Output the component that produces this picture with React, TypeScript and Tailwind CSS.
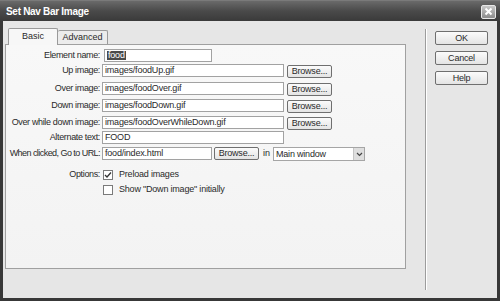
import React from "react";

const font = { fontFamily: '"Liberation Sans", Arial, sans-serif' };

const Input = ({ value, w, selected }: { value: string; w: string; selected?: boolean }) => (
  <div className={`${w} h-[13px] bg-white border border-[#a2a2a2] flex items-center px-[2px] text-[9px] tracking-[-0.2px] text-[#2a2a2a] overflow-hidden whitespace-nowrap leading-none`}>
    {selected ? <span className="bg-[#4a4a4a] text-white px-[1px]">{value}</span> : value}
  </div>
);

const Btn = ({ label, w }: { label: string; w: string }) => (
  <div className={`${w} rounded-[2px] border border-[#6f6f6f] bg-gradient-to-b from-[#fbfbfb] to-[#e4e4e4] flex items-center justify-center text-[9px] tracking-[-0.2px] text-[#2a2a2a] leading-none`}>
    {label}
  </div>
);

const Label = ({ text, ml = "ml-[2px]", tight }: { text: string; ml?: string; tight?: boolean }) => (
  <div className="flex">
    <div className={`w-[94px] h-[13px] flex items-center justify-end text-[9px] ${tight ? "tracking-[-0.55px]" : "tracking-[-0.35px]"} text-[#2a2a2a] whitespace-nowrap leading-none`}>
      {text}
    </div>
    <div className={ml} />
  </div>
);

const Check = ({ checked }: { checked?: boolean }) => (
  <div className="w-[10px] h-[10px] bg-white border border-[#7a7a7a] flex items-center justify-center">
    {checked && (
      <svg width="8" height="8" viewBox="0 0 8 8">
        <path d="M1 4 L3 6 L7 1.5" fill="none" stroke="#333" strokeWidth="1.3" />
      </svg>
    )}
  </div>
);

const imageRows = [
  { label: "Up image:", value: "images/foodUp.gif", h: "h-[18px]" },
  { label: "Over image:", value: "images/foodOver.gif", h: "h-[17px]" },
  { label: "Down image:", value: "images/foodDown.gif", h: "h-[17px]" },
  { label: "Over while down image:", value: "images/foodOverWhileDown.gif", h: "h-[15px]" },
];

export default function App() {
  return (
    <div className="w-[500px] h-[301px] bg-[#383838] flex flex-col overflow-hidden" style={font}>
      {/* title bar */}
      <div className="h-[21px] bg-gradient-to-b from-[#6a6a6a] via-[#4a4a4a] to-[#3a3a3a] flex items-center justify-between pl-[6px] pr-[4px] border-t border-[#7a7a7a]">
        <span className="text-white font-bold text-[10px] tracking-[-0.3px]">Set Nav Bar Image</span>
        <div className="w-[15px] h-[14px] mt-[1px] rounded-[2px] border border-[#e8e8e8] bg-gradient-to-b from-[#c8c8c8] to-[#8c8c8c] flex items-center justify-center">
          <svg width="9" height="9" viewBox="0 0 9 9">
            <path d="M1.5 1.5 L7.5 7.5 M7.5 1.5 L1.5 7.5" stroke="#fff" strokeWidth="2" />
          </svg>
        </div>
      </div>

      {/* body */}
      <div className="flex-1 mx-[3px] mb-[3px] bg-[#e6e6e6] flex">
        <div className="w-[405px] pl-[2px] pt-[7px] flex flex-col">
          {/* tabs */}
          <div className="flex items-end pl-[3px] h-[16px]">
            <div className="w-[50px] h-[17px] -mb-px relative z-10 bg-[#f7f7f7] border border-b-0 border-[#9a9a9a] rounded-t-[2px] flex items-center justify-center text-[9px] text-[#2a2a2a]">
              Basic
            </div>
            <div className="w-[50px] h-[14px] bg-[#ececec] border border-b-0 border-l-0 border-[#9a9a9a] rounded-t-[2px] flex items-center justify-center text-[9px] text-[#2a2a2a]">
              Advanced
            </div>
          </div>

          {/* panel */}
          <div className="w-[401px] h-[225px] border border-[#a0a0a0] bg-gradient-to-b from-[#f8f8f8] to-[#f3f3f3] pt-[4px] flex flex-col">
            <div className="flex items-start h-[15px]">
              <Label text="Element name:" ml="ml-[4px]" />
              <Input value="food" w="w-[108px]" selected />
            </div>
            {imageRows.map((r) => (
              <div key={r.label} className={`flex items-start ${r.h}`}>
                <Label text={r.label} />
                <Input value={r.value} w="w-[182px]" />
                <div className="ml-[3px] mt-px">
                  <Btn label="Browse..." w="w-[45px] h-[13px]" />
                </div>
              </div>
            ))}
            <div className="flex items-start h-[16px]">
              <Label text="Alternate text:" />
              <Input value="FOOD" w="w-[182px]" />
            </div>
            <div className="flex items-start h-[20px]">
              <Label text="When clicked, Go to URL:" tight />
              <Input value="food/index.html" w="w-[110px]" />
              <div className="ml-[2px]">
                <Btn label="Browse..." w="w-[45px] h-[13px]" />
              </div>
              <span className="ml-[4px] h-[13px] flex items-center text-[9px] text-[#2a2a2a] leading-none">in</span>
              <div className="ml-[3px] w-[92px] h-[14px] bg-white border border-[#a5a5a5] flex items-center text-[9px] tracking-[-0.2px] text-[#2a2a2a] leading-none">
                <span className="flex-1 pl-[2px]">Main window</span>
                <div className="w-[11px] h-[12px] bg-[#dedede] border-l border-[#c4c4c4] flex items-center justify-center">
                  <svg width="7" height="5" viewBox="0 0 7 5">
                    <path d="M1 1 L3.5 3.5 L6 1" fill="none" stroke="#444" strokeWidth="1.2" />
                  </svg>
                </div>
              </div>
            </div>
            <div className="flex items-center h-[15px]">
              <div className="w-[94px] flex justify-end text-[9px] tracking-[-0.35px] text-[#2a2a2a]">Options:</div>
              <div className="ml-[3px]">
                <Check checked />
              </div>
              <span className="ml-[6px] text-[9px] tracking-[-0.2px] text-[#2a2a2a]">Preload images</span>
            </div>
            <div className="flex items-center h-[15px]">
              <div className="w-[94px]" />
              <div className="ml-[3px]">
                <Check />
              </div>
              <span className="ml-[6px] text-[9px] tracking-[-0.2px] text-[#2a2a2a]">Show "Down image" initially</span>
            </div>
          </div>
        </div>

        {/* separator */}
        <div className="ml-[17px] mt-[8px] mb-[8px] w-[2px] border-l border-[#9c9c9c] border-r border-r-white" />

        {/* buttons */}
        <div className="ml-[8px] pt-[10px] flex flex-col gap-[6px]">
          <Btn label="OK" w="w-[53px] h-[14px]" />
          <Btn label="Cancel" w="w-[53px] h-[14px]" />
          <Btn label="Help" w="w-[53px] h-[14px]" />
        </div>
      </div>
    </div>
  );
}
